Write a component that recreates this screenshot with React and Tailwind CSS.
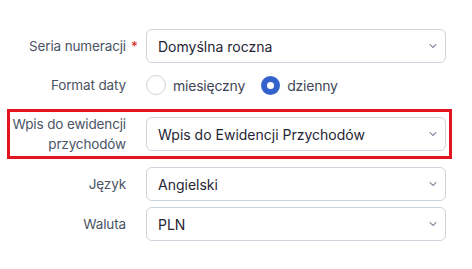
import React from "react";

function Chevron() {
  return (
    <svg width="8" height="5" viewBox="0 0 8 5" className="absolute right-[8px] top-1/2 -translate-y-1/2" fill="none">
      <path d="M1 1l3 3 3-3" stroke="#8c95a5" strokeWidth="1.1" strokeLinecap="round" strokeLinejoin="round" />
    </svg>
  );
}

function Select({ value }) {
  return (
    <div className="relative w-[300px] h-[34px] border border-[#cdd3dc] rounded-[6px] bg-white flex items-center pl-[11px] text-[14px] text-[#1f2533]">
      <span>{value}</span>
      <Chevron />
    </div>
  );
}

function Label({ children, star }) {
  return (
    <div className="relative w-[126px] text-right text-[13.5px] tracking-[-0.01em] leading-[20px] text-[#4a5465] shrink-0">
      {children}
      {star && <span className="absolute left-full ml-[5px] top-0 text-[#dc2626]">*</span>}
    </div>
  );
}

export default function App() {
  return (
    <div className="w-[472px] h-[269px] bg-white pt-[29px] relative" style={{ fontFamily: "Inter, 'Noto Sans', sans-serif" }}>
      <div className="flex items-center h-[34px]">
        <Label star>Seria numeracji</Label>
        <div className="ml-[20px]"><Select value="Domyślna roczna" /></div>
      </div>
      <div className="flex items-center h-[34px] mt-[5px]">
        <Label>Format daty</Label>
        <div className="ml-[20px] flex items-center text-[14px] tracking-[-0.015em] text-[#3f4756]">
          <span className="w-[20px] h-[20px] rounded-full border border-[#cdd3dc] bg-white" />
          <span className="ml-[7px]">miesięczny</span>
          <span className="ml-[16px] w-[19px] h-[19px] rounded-full border-[6px] border-[#3462cb] bg-white" />
          <span className="ml-[7px]">dzienny</span>
        </div>
      </div>
      <div className="flex items-center h-[40px] mt-[12px] relative">
        <Label>Wpis do ewidencji<br />przychodów</Label>
        <div className="ml-[20px]"><Select value="Wpis do Ewidencji Przychodów" /></div>
        <div className="absolute left-[7px] top-[-5px] w-[445px] h-[50px] border-[3px] border-[#e3141e] pointer-events-none" />
      </div>
      <div className="flex items-center h-[34px] mt-[13px]">
        <Label>Język</Label>
        <div className="ml-[20px]"><Select value="Angielski" /></div>
      </div>
      <div className="flex items-center h-[34px] mt-[6px]">
        <Label>Waluta</Label>
        <div className="ml-[20px]"><Select value="PLN" /></div>
      </div>
    </div>
  );
}
